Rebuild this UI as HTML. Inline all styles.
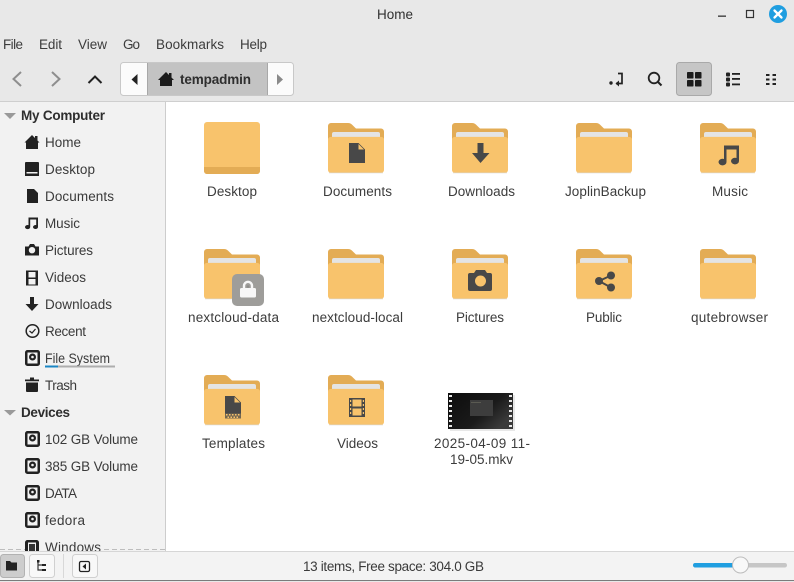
<!DOCTYPE html>
<html><head><meta charset="utf-8"><title>Home</title>
<style>
html,body{margin:0;padding:0;background:#fff;width:794px;height:582px;overflow:hidden}
svg{display:block}
text{font-family:"Liberation Sans",sans-serif;font-size:13.5px;fill:#3c3c3c}
.s{fill:#3a3a3a}
.b{font-weight:bold;fill:#2e2e2e}
.i{fill:#222}
.f{fill:#484848}
</style></head><body>
<svg width="794" height="582" viewBox="0 0 794 582" xmlns="http://www.w3.org/2000/svg">
<defs>
<linearGradient id="th" x1="0" y1="0" x2="1" y2="0.6"><stop offset="0" stop-color="#0c0c0c"/><stop offset=".65" stop-color="#1a1a1a"/><stop offset="1" stop-color="#3a3a3a"/></linearGradient>
<g id="fo">
<path d="M0 3a3 3 0 0 1 3-3h17c2 0 3 .8 4 1.600L28 5.500h25a3 3 0 0 1 3 3V30H0Z" fill="#e3ac55"/>
<rect x="4" y="9" width="48" height="12" rx="2" fill="#e4e4e4"/>
<path d="M0 16.500c0-1 .5-2 2-2.500l2 -.1h48l2 .1c1.500.5 2 1.500 2 2.500V47a3 3 0 0 1-3 3H3a3 3 0 0 1-3-3Z" fill="#f8c36c"/>
<path d="M1 49.600h54v.6H1Z" fill="#d8d8d8"/>
</g>
<g id="disk"><path fill-rule="evenodd" d="M2.500 0h10A2.500 2.500 0 0 1 15 2.500v11a2.500 2.500 0 0 1-2.500 2.500h-10A2.500 2.500 0 0 1 0 13.500v-11A2.500 2.500 0 0 1 2.500 0ZM2.500 2.500v11h10v-11ZM7.500 3.500a3.500 3.500 0 1 1 0 7a3.500 3.500 0 0 1 0-7ZM7.500 5.700a1.300 1.300 0 1 0 0 2.600a1.300 1.300 0 0 0 0-2.600Z" fill="#222"/></g>
</defs>

<!-- chrome -->
<rect width="794" height="101" fill="#e8e8e8"/>
<rect y="101" width="794" height="1" fill="#cfcfcf"/>
<rect y="102" width="165" height="449" fill="#f2f2f2"/>
<rect x="165" y="102" width="1" height="449" fill="#cdcdcd"/>
<rect x="166" y="102" width="628" height="449" fill="#fff"/>

<!-- title -->
<text x="377" y="19" textLength="36" class="s" style="font-size:13.5px;fill:#303030">Home</text>
<rect x="718" y="15.500" width="8" height="1.300" fill="#333"/>
<rect x="746.500" y="10.500" width="7" height="7" fill="none" stroke="#333" stroke-width="1.200"/>
<circle cx="778" cy="14" r="9" fill="#1f9ee0"/>
<path d="M774.500 10.500l7 7m0-7l-7 7" stroke="#fff" stroke-width="2.300" stroke-linecap="round"/>

<!-- menu -->
<text x="3" y="49" textLength="20">File</text>
<text x="39" y="49" textLength="23">Edit</text>
<text x="78" y="49" textLength="29">View</text>
<text x="123" y="49" textLength="17">Go</text>
<text x="156" y="49" textLength="68">Bookmarks</text>
<text x="240" y="49" textLength="27">Help</text>

<!-- nav -->
<path d="M21 72l-7.500 7 7.500 7" fill="none" stroke="#8e8e8e" stroke-width="2"/>
<path d="M52 72l7.500 7-7.500 7" fill="none" stroke="#8e8e8e" stroke-width="2"/>
<path d="M88.500 83l6.500-6.500 6.500 6.500" fill="none" stroke="#222" stroke-width="2"/>

<!-- path bar -->
<rect x="120.500" y="62.500" width="173" height="33" rx="3" fill="#fbfbfb" stroke="#c8c8c8"/>
<rect x="147" y="63" width="121" height="32" fill="#c3c3c3"/>
<rect x="147" y="63" width="1" height="32" fill="#a8a8a8"/>
<rect x="267" y="63" width="1" height="32" fill="#a8a8a8"/>
<path d="M137.500 74v11l-6-5.500Z" fill="#222"/>
<path d="M277 74v11l6-5.500Z" fill="#8a8a8a"/>
<path d="M158 80L166 72l3 3v-2h2.500v4.500L174 80h-2v6h-12v-6Z" fill="#1c1c1c"/>
<text x="180" y="84" textLength="71" class="b" style="font-size:13.5px">tempadmin</text>

<!-- right tools -->
<circle cx="611" cy="83" r="1.700" fill="#222"/>
<path d="M616 83.500h6v-10h-4" fill="none" stroke="#222" stroke-width="1.700"/>
<path d="M619 80.500l-3.500 3 3.500 3Z" fill="#222"/>
<circle cx="654" cy="78" r="5.300" fill="none" stroke="#222" stroke-width="1.800"/>
<path d="M658 82l3.500 3.500" stroke="#222" stroke-width="2"/>
<rect x="676.500" y="62.500" width="35" height="33" rx="3" fill="#c6c6c6" stroke="#a9a9a9"/>
<g fill="#1c1c1c"><rect x="687" y="72" width="6.500" height="6.500" rx=".8"/><rect x="695" y="72" width="6.500" height="6.500" rx=".8"/><rect x="687" y="80" width="6.500" height="6.500" rx=".8"/><rect x="695" y="80" width="6.500" height="6.500" rx=".8"/></g>
<g fill="#222"><rect x="726" y="72.500" width="4" height="4" rx="1"/><rect x="726" y="77.500" width="4" height="4" rx="1"/><rect x="726" y="82.500" width="4" height="4" rx="1"/><rect x="732" y="73" width="8" height="1.800"/><rect x="732" y="78" width="8" height="1.800"/><rect x="732" y="83.500" width="8" height="1.800"/></g>
<g fill="#222"><rect x="766" y="74" width="3.500" height="2"/><rect x="772.500" y="74" width="3.500" height="2"/><rect x="766" y="78.500" width="3.500" height="2"/><rect x="772.500" y="78.500" width="3.500" height="2"/><rect x="766" y="83" width="3.500" height="2"/><rect x="772.500" y="83" width="3.500" height="2"/></g>

<!-- sidebar -->
<path d="M4 113h12l-6 6Z" fill="#9a9a9a"/>
<text x="21" y="120" textLength="84" class="b">My Computer</text>
<text x="45" y="147" textLength="36" class="s">Home</text>
<text x="45" y="174" textLength="50" class="s">Desktop</text>
<text x="45" y="201" textLength="69" class="s">Documents</text>
<text x="45" y="228" textLength="35" class="s">Music</text>
<text x="45" y="255" textLength="48" class="s">Pictures</text>
<text x="45" y="282" textLength="41" class="s">Videos</text>
<text x="45" y="309" textLength="67" class="s">Downloads</text>
<text x="45" y="336" textLength="41" class="s">Recent</text>
<text x="45" y="363" textLength="65" lengthAdjust="spacingAndGlyphs" class="s">File System</text>
<text x="45" y="390" textLength="32" class="s">Trash</text>
<rect x="45" y="365.500" width="70" height="2" fill="#adadad"/>
<rect x="45" y="365.500" width="13" height="2" fill="#1b86c4"/>
<path d="M4 410h12l-6 5.500Z" fill="#9a9a9a"/>
<text x="21" y="417" textLength="49" class="b">Devices</text>
<text x="45" y="444" textLength="93" class="s">102 GB Volume</text>
<text x="45" y="471" textLength="93" class="s">385 GB Volume</text>
<text x="45" y="498" textLength="32" class="s">DATA</text>
<text x="45" y="525" textLength="40" class="s">fedora</text>
<text x="45" y="552" textLength="56" class="s">Windows</text>
<!-- dashed clip line -->
<path d="M0 549.500h25M104 549.500h61" stroke="#bdbdbd" stroke-dasharray="5 3" fill="none"/>

<!-- sidebar icons -->
<path d="M24.500 142.500l7.500-7.500 3 3v-2h2.500v4.500l2 2h-1.500v6.500h-12v-6.500Z" class="i"/>
<path fill-rule="evenodd" d="M25 163a1 1 0 0 1 1-1h12a1 1 0 0 1 1 1v13H25ZM26.500 172v1.500h11V172Z" class="i"/>
<path d="M27 189h7l4 4v10H27Z" class="i"/>
<path d="M28.500 217.500h9.500v9.500a2.500 2 0 1 1-1.800-1.900V219.500h-6v7.500a2.600 2.100 0 1 1-1.700-1.900Z" class="i"/>
<path fill-rule="evenodd" d="M25 246.500h3.500l1.500-2.500h4l1.500 2.500h3.500v9H25ZM32 247a3.200 3.200 0 1 0 0 6.400a3.200 3.200 0 0 0 0-6.400Z" class="i"/>
<path fill-rule="evenodd" d="M26 270.500h12v15H26ZM28.500 272v5.500h7V272ZM28.500 279v5.500h7V279Z" class="i"/>
<path d="M30 297h4v7h4.500l-6.500 7-6.500-7H30Z" class="i"/>
<circle cx="32.500" cy="331" r="6.300" fill="none" stroke="#222" stroke-width="1.500"/>
<path d="M29.500 331l2.500 2 3.500-4" fill="none" stroke="#222" stroke-width="1.200"/>
<use href="#disk" x="25" y="350"/>
<path d="M25 379.500h14v1.700H25ZM30 377.500h4v2h-4ZM26 382.500h12V391a1 1 0 0 1-1 1H27a1 1 0 0 1-1-1Z" class="i"/>
<use href="#disk" x="25" y="431"/>
<use href="#disk" x="25" y="458"/>
<use href="#disk" x="25" y="485"/>
<use href="#disk" x="25" y="512"/>
<path fill-rule="evenodd" d="M27.500 540h9A2.500 2.500 0 0 1 39 542.500V552H25v-9.500A2.500 2.500 0 0 1 27.500 540ZM28 542.500v9h8v-9Z" class="i"/>
<rect x="29" y="544" width="6" height="7" fill="#333"/>

<!-- folders -->
<g>
<rect x="204" y="122" width="56" height="52" rx="3" fill="#f8c36c"/>
<path d="M204 167h56v4a3 3 0 0 1-3 3h-50a3 3 0 0 1-3-3Z" fill="#e3ac55"/>
</g>
<use href="#fo" x="328" y="123"/>
<use href="#fo" x="452" y="123"/>
<use href="#fo" x="576" y="123"/>
<use href="#fo" x="700" y="123"/>
<use href="#fo" x="204" y="249"/>
<use href="#fo" x="328" y="249"/>
<use href="#fo" x="452" y="249"/>
<use href="#fo" x="576" y="249"/>
<use href="#fo" x="700" y="249"/>
<use href="#fo" x="204" y="375"/>
<use href="#fo" x="328" y="375"/>

<!-- folder glyphs -->
<path d="M349 143h9.500l6.500 6.500V163h-16Z" class="f"/>
<path d="M358.500 144v5.500h5.500Z" fill="#f8c36c"/>
<path d="M477.500 143h6v10h6l-9 10-8.500-10h5.500Z" class="f"/>
<path d="M724 145.500h15v15.500a4 3.300 0 1 1-2.500-3V149.500h-10V162a4 3.300 0 1 1-2.500-3Z" class="f"/>
<path fill-rule="evenodd" d="M468 275a2 2 0 0 1 2-2h4l2-3h9l2 3h3a2 2 0 0 1 2 2v14a2 2 0 0 1-2 2h-20a2 2 0 0 1-2-2ZM480.500 275.500a5.500 5.500 0 1 0 0 11a5.500 5.500 0 0 0 0-11Z" class="f"/>
<circle cx="599" cy="281" r="4" class="f"/><circle cx="611" cy="275.500" r="4" class="f"/><circle cx="611" cy="287.500" r="4" class="f"/>
<path d="M599 281l12-5.500M599 281l12 6.500" stroke="#484848" stroke-width="2"/>
<path d="M225 396h9.500l6.500 6.500v11h-16Z" class="f"/>
<path d="M234.500 397v5.500h5.500Z" fill="#f8c36c"/>
<g fill="#484848" opacity=".75"><rect x="225" y="413.500" width="16" height="5"/></g>
<g fill="#f8c36c"><rect x="226" y="414" width="1.500" height="1.500"/><rect x="229" y="414" width="1.500" height="1.500"/><rect x="232" y="414" width="1.500" height="1.500"/><rect x="235" y="414" width="1.500" height="1.500"/><rect x="238" y="414" width="1.500" height="1.500"/><rect x="227.500" y="416.500" width="1.500" height="1.500"/><rect x="230.500" y="416.500" width="1.500" height="1.500"/><rect x="233.500" y="416.500" width="1.500" height="1.500"/><rect x="236.500" y="416.500" width="1.500" height="1.500"/></g>
<path fill-rule="evenodd" d="M349 398h16v19h-16ZM352.500 399.500v7h9v-7ZM352.500 408.500v7h9v-7ZM350 400v2h1.200v-2ZM350 404v2h1.200v-2ZM350 408v2h1.200v-2ZM350 412v2h1.200v-2ZM362.800 400v2h1.200v-2ZM362.800 404v2h1.200v-2ZM362.800 408v2h1.200v-2ZM362.800 412v2h1.200v-2Z" class="f"/>

<!-- lock emblem -->
<rect x="232" y="274" width="32" height="32" rx="5" fill="#9e9d9a"/>
<path d="M244 289v-3.200a4 4 0 0 1 8 0V289" fill="none" stroke="#f7f7f7" stroke-width="2.400"/>
<rect x="240" y="288" width="16" height="9.500" rx="1.500" fill="#f7f7f7"/>
<circle cx="248" cy="286.500" r="1.300" fill="#8e8d8a"/>

<!-- thumbnail -->
<rect x="450" y="395" width="65" height="36" fill="#d9d9d9" opacity=".6"/>
<rect x="448" y="393" width="65" height="36" fill="url(#th)"/>
<rect x="470" y="400" width="23" height="16" fill="#3d3d3d"/>
<rect x="471" y="402" width="10" height="1" fill="#5a5a52"/>
<g fill="#e6e6e6">
<rect x="449" y="395" width="3" height="2"/><rect x="449" y="400" width="3" height="2"/><rect x="449" y="405" width="3" height="2"/><rect x="449" y="410" width="3" height="2"/><rect x="449" y="415" width="3" height="2"/><rect x="449" y="420" width="3" height="2"/><rect x="449" y="425" width="3" height="2"/>
<rect x="509" y="395" width="3" height="2"/><rect x="509" y="400" width="3" height="2"/><rect x="509" y="405" width="3" height="2"/><rect x="509" y="410" width="3" height="2"/><rect x="509" y="415" width="3" height="2"/><rect x="509" y="420" width="3" height="2"/><rect x="509" y="425" width="3" height="2"/>
</g>

<!-- labels -->
<text x="207" y="196" textLength="50">Desktop</text>
<text x="323" y="196" textLength="69">Documents</text>
<text x="448" y="196" textLength="67">Downloads</text>
<text x="565" y="196" textLength="81">JoplinBackup</text>
<text x="712" y="196" textLength="36">Music</text>
<text x="188" y="322" textLength="91">nextcloud-data</text>
<text x="312" y="322" textLength="91">nextcloud-local</text>
<text x="456" y="322" textLength="48">Pictures</text>
<text x="586" y="322" textLength="36">Public</text>
<text x="691" y="322" textLength="77">qutebrowser</text>
<text x="202" y="448" textLength="63">Templates</text>
<text x="337" y="448" textLength="41">Videos</text>
<text x="434" y="448" textLength="96">2025-04-09 11-</text>
<text x="450" y="464" textLength="63">19-05.mkv</text>

<!-- status bar -->
<rect y="551" width="794" height="29" fill="#f3f3f3"/>
<rect y="551" width="794" height="1" fill="#d6d6d6"/>
<rect y="580" width="794" height="1" fill="#7b7b7b"/>
<rect y="581" width="794" height="1" fill="#e8e8e8"/>
<rect x="0.500" y="554.500" width="24" height="23" rx="3" fill="#cdcdcd" stroke="#b2b2b2"/>
<rect x="29.500" y="554.500" width="25" height="23" rx="3" fill="#f8f8f8" stroke="#d0d0d0"/>
<rect x="63" y="554" width="1" height="24" fill="#d8d8d8"/>
<rect x="72.500" y="554.500" width="25" height="23" rx="3" fill="#f8f8f8" stroke="#d0d0d0"/>
<path d="M6 561h4l1.500 1.500H17v8H6Z" fill="#222"/>
<path d="M38 561v9h8M38 565h8" fill="none" stroke="#333" stroke-width="1.200"/>
<rect x="37" y="560" width="2.500" height="2.500" fill="#222"/><rect x="42" y="564" width="4" height="2" fill="#222"/><rect x="42" y="569" width="4" height="2" fill="#222"/>
<rect x="79.500" y="561.500" width="10" height="10" rx="1.500" fill="none" stroke="#222" stroke-width="1.300"/>
<path d="M86 563.500v6l-3.500-3Z" fill="#222"/>
<text x="303" y="571" textLength="181" class="s">13 items, Free space: 304.0 GB</text>
<rect x="693" y="563" width="94" height="4.500" rx="2.200" fill="#c6c6c6"/>
<rect x="693" y="563" width="44" height="4.500" rx="2.200" fill="#1f9ee0"/>
<circle cx="740.500" cy="565" r="8" fill="#f8f8f8" stroke="#bdbdbd"/>
</svg>
</body></html>
